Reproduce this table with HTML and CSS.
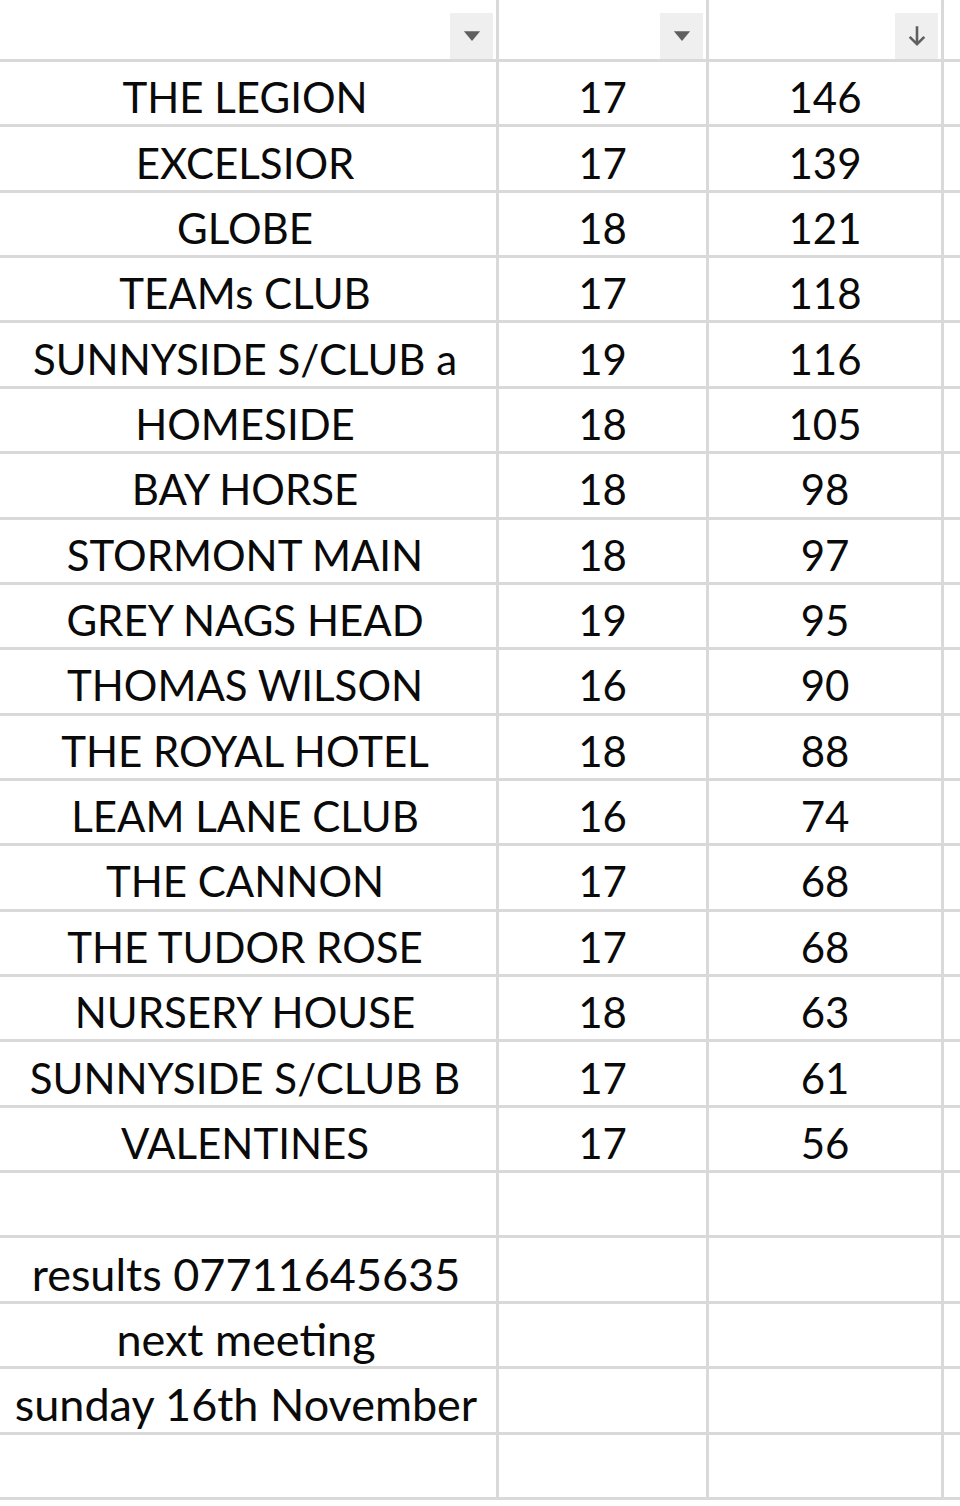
FILE: index.html
```html
<!DOCTYPE html>
<html>
<head>
<meta charset="utf-8">
<link rel="stylesheet" href="styles.css">
</head>
<body>
<div class="sheet">
  <div class="cell head"><span class="filter"><svg viewBox="0 0 16 16" class="ico"><path d="M3 5h10l-5 6z" fill="#5f5f5f"/></svg></span></div>
  <div class="cell head"><span class="filter"><svg viewBox="0 0 16 16" class="ico"><path d="M3 5h10l-5 6z" fill="#5f5f5f"/></svg></span></div>
  <div class="cell head"><span class="filter"><svg viewBox="0 0 16 16" class="ico"><path d="M8 2v11M3.5 8.5L8 13l4.5-4.5" fill="none" stroke="#5f5f5f" stroke-width="1.6"/></svg></span></div>
  <div class="cell head edge"></div>

  <div class="cell name">THE LEGION</div><div class="cell">17</div><div class="cell">146</div><div class="cell edge"></div>
  <div class="cell name">EXCELSIOR</div><div class="cell">17</div><div class="cell">139</div><div class="cell edge"></div>
  <div class="cell name">GLOBE</div><div class="cell">18</div><div class="cell">121</div><div class="cell edge"></div>
  <div class="cell name">TEAMs CLUB</div><div class="cell">17</div><div class="cell">118</div><div class="cell edge"></div>
  <div class="cell name">SUNNYSIDE S/CLUB a</div><div class="cell">19</div><div class="cell">116</div><div class="cell edge"></div>
  <div class="cell name">HOMESIDE</div><div class="cell">18</div><div class="cell">105</div><div class="cell edge"></div>
  <div class="cell name">BAY HORSE</div><div class="cell">18</div><div class="cell">98</div><div class="cell edge"></div>
  <div class="cell name">STORMONT MAIN</div><div class="cell">18</div><div class="cell">97</div><div class="cell edge"></div>
  <div class="cell name">GREY NAGS HEAD</div><div class="cell">19</div><div class="cell">95</div><div class="cell edge"></div>
  <div class="cell name">THOMAS WILSON</div><div class="cell">16</div><div class="cell">90</div><div class="cell edge"></div>
  <div class="cell name">THE ROYAL HOTEL</div><div class="cell">18</div><div class="cell">88</div><div class="cell edge"></div>
  <div class="cell name">LEAM LANE CLUB</div><div class="cell">16</div><div class="cell">74</div><div class="cell edge"></div>
  <div class="cell name">THE CANNON</div><div class="cell">17</div><div class="cell">68</div><div class="cell edge"></div>
  <div class="cell name">THE TUDOR ROSE</div><div class="cell">17</div><div class="cell">68</div><div class="cell edge"></div>
  <div class="cell name">NURSERY HOUSE</div><div class="cell">18</div><div class="cell">63</div><div class="cell edge"></div>
  <div class="cell name">SUNNYSIDE S/CLUB B</div><div class="cell">17</div><div class="cell">61</div><div class="cell edge"></div>
  <div class="cell name">VALENTINES</div><div class="cell">17</div><div class="cell">56</div><div class="cell edge"></div>
  <div class="cell"></div><div class="cell"></div><div class="cell"></div><div class="cell edge"></div>
  <div class="cell note">results 07711645635</div><div class="cell"></div><div class="cell"></div><div class="cell edge"></div>
  <div class="cell note">next meeting</div><div class="cell"></div><div class="cell"></div><div class="cell edge"></div>
  <div class="cell note">sunday 16th November</div><div class="cell"></div><div class="cell"></div><div class="cell edge"></div>
  <div class="cell"></div><div class="cell"></div><div class="cell"></div><div class="cell edge"></div>
</div>
</body>
</html>
```
FILE: styles.css
```css
html, body {
  margin: 0;
  padding: 0;
  background: #ffffff;
}
.sheet {
  display: grid;
  grid-template-columns: 499px 210px 235px 16px;
  grid-template-rows: 62px repeat(22, 65.36px);
  width: 960px;
  font-family: Lato, "Open Sans", sans-serif;
  font-size: 42px;
  color: #0a0a0a;
}
.cell {
  box-sizing: border-box;
  border-right: 3px solid #d9d9d9;
  border-bottom: 3px solid #d9d9d9;
  display: flex;
  align-items: center;
  justify-content: center;
  padding-top: 8px;
  white-space: nowrap;
  overflow: visible;
}
.name {
  padding-right: 6px;
}
.note {
  font-size: 45px;
  padding-right: 4px;
}
.edge {
  border-right: none;
}
.head {
  justify-content: flex-end;
  align-items: flex-end;
  padding: 0 3px 0 0;
}
.filter {
  width: 43px;
  height: 46px;
  background: #efefef;
  display: flex;
  align-items: center;
  justify-content: center;
}
.ico {
  width: 26px;
  height: 26px;
}
```
